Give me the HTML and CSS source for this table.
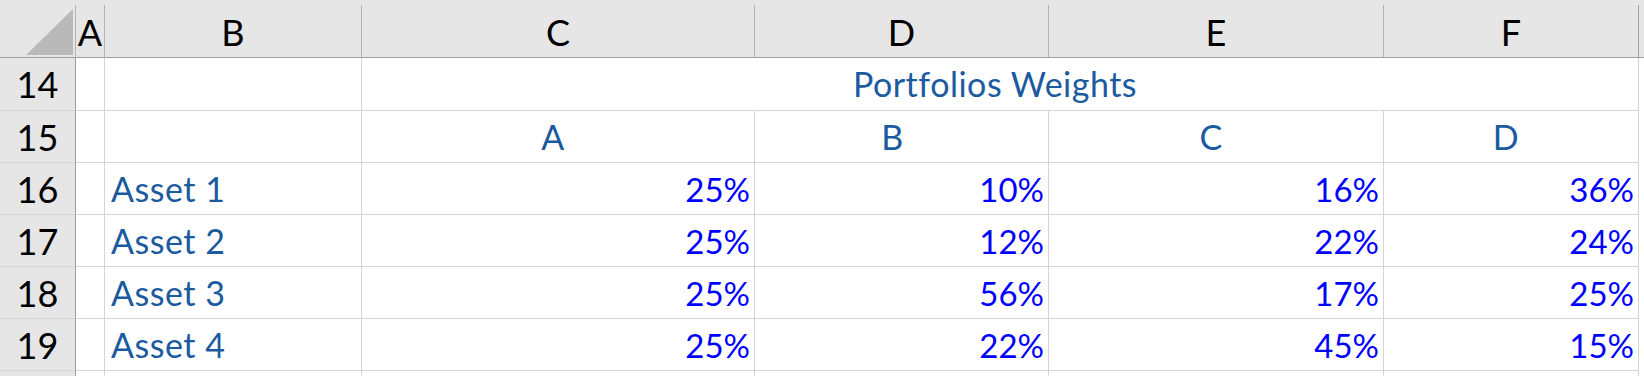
FILE: index.html
```html
<!DOCTYPE html>
<html>
<head>
<meta charset="utf-8">
<link rel="stylesheet" href="styles.css">
</head>
<body>
<div class="sheet">
  <div class="topstrip"></div>
  <div class="grid">
    <div class="corner"><svg width="75" height="52" viewBox="0 0 75 52"><polygon points="73,4 73,50 26,50" fill="#b9b9b9"/></svg></div>
    <div class="colhead">A</div>
    <div class="colhead">B</div>
    <div class="colhead">C</div>
    <div class="colhead">D</div>
    <div class="colhead">E</div>
    <div class="colhead">F</div>
    <div class="colfill"></div>

    <div class="rowhead">14</div>
    <div class="cell"></div>
    <div class="cell"></div>
    <div class="cell merged label center">Portfolios Weights</div>
    <div class="fill"></div>

    <div class="rowhead">15</div>
    <div class="cell"></div>
    <div class="cell"></div>
    <div class="cell label center">A</div>
    <div class="cell label center shift">B</div>
    <div class="cell label center">C</div>
    <div class="cell label center">D</div>
    <div class="fill"></div>

    <div class="rowhead">16</div>
    <div class="cell"></div>
    <div class="cell label">Asset 1</div>
    <div class="cell num">25%</div>
    <div class="cell num">10%</div>
    <div class="cell num">16%</div>
    <div class="cell num">36%</div>
    <div class="fill"></div>

    <div class="rowhead">17</div>
    <div class="cell"></div>
    <div class="cell label">Asset 2</div>
    <div class="cell num">25%</div>
    <div class="cell num">12%</div>
    <div class="cell num">22%</div>
    <div class="cell num">24%</div>
    <div class="fill"></div>

    <div class="rowhead">18</div>
    <div class="cell"></div>
    <div class="cell label">Asset 3</div>
    <div class="cell num">25%</div>
    <div class="cell num">56%</div>
    <div class="cell num">17%</div>
    <div class="cell num">25%</div>
    <div class="fill"></div>

    <div class="rowhead">19</div>
    <div class="cell"></div>
    <div class="cell label">Asset 4</div>
    <div class="cell num">25%</div>
    <div class="cell num">22%</div>
    <div class="cell num">45%</div>
    <div class="cell num">15%</div>
    <div class="fill"></div>

    <div class="rowhead last"></div>
    <div class="cell last"></div>
    <div class="cell last"></div>
    <div class="cell last"></div>
    <div class="cell last"></div>
    <div class="cell last"></div>
    <div class="cell last"></div>
    <div class="fill"></div>
  </div>
</div>
</body>
</html>
```

FILE: styles.css
```css
* { box-sizing: border-box; }
html, body { margin: 0; padding: 0; background: #ffffff; }
body { width: 1644px; height: 376px; overflow: hidden; font-family: Lato, "Open Sans", sans-serif; }

.sheet { width: 1644px; }
.topstrip { height: 5px; background: #e6e6e6; }

.grid {
  display: grid;
  grid-template-columns: 76px 29px 257px 393px 294px 335px 255px 5px;
  grid-template-rows: 53px 53px 52px 52px 52px 52px 52px 6px;
}

.corner {
  background: #e6e6e6;
  border-right: 1px solid #b4b4b4;
  border-bottom: 1px solid #9e9e9e;
  overflow: hidden;
}
.corner svg { display: block; }

.colhead {
  background: #e6e6e6;
  border-right: 1px solid #b4b4b4;
  border-bottom: 1px solid #9e9e9e;
  color: #000;
  font-size: 36px;
  line-height: 52px;
  padding-top: 1px;
  text-align: center;
  overflow: hidden;
}
.colhead:nth-child(7) { border-right-color: #9e9e9e; }
.colfill { background: #e6e6e6; border-bottom: 1px solid #9e9e9e; }

.rowhead {
  background: #e6e6e6;
  border-right: 1px solid #9e9e9e;
  border-bottom: 1px solid #d4d4d4;
  color: #000;
  font-size: 36px;
  line-height: 52px;
  text-align: center;
  overflow: hidden;
}
.rowhead.last { border-bottom: none; }

.cell {
  border-right: 1px solid #d4d4d4;
  border-bottom: 1px solid #d4d4d4;
  font-size: 33px;
  line-height: 52px;
  white-space: nowrap;
  overflow: hidden;
}
.cell.last { border-bottom: none; }
.merged { grid-column: span 4; }
.fill { background: #ffffff; }

.label { color: #1c5a9f; padding-left: 6px; font-size: 34px; letter-spacing: 0.5px; }
.center { text-align: center; padding-left: 0; padding-right: 10px; }
.merged.center { padding-right: 10px; }
.shift { padding-right: 18px; }
.num { color: #0000ff; text-align: right; padding-right: 4px; }
```
